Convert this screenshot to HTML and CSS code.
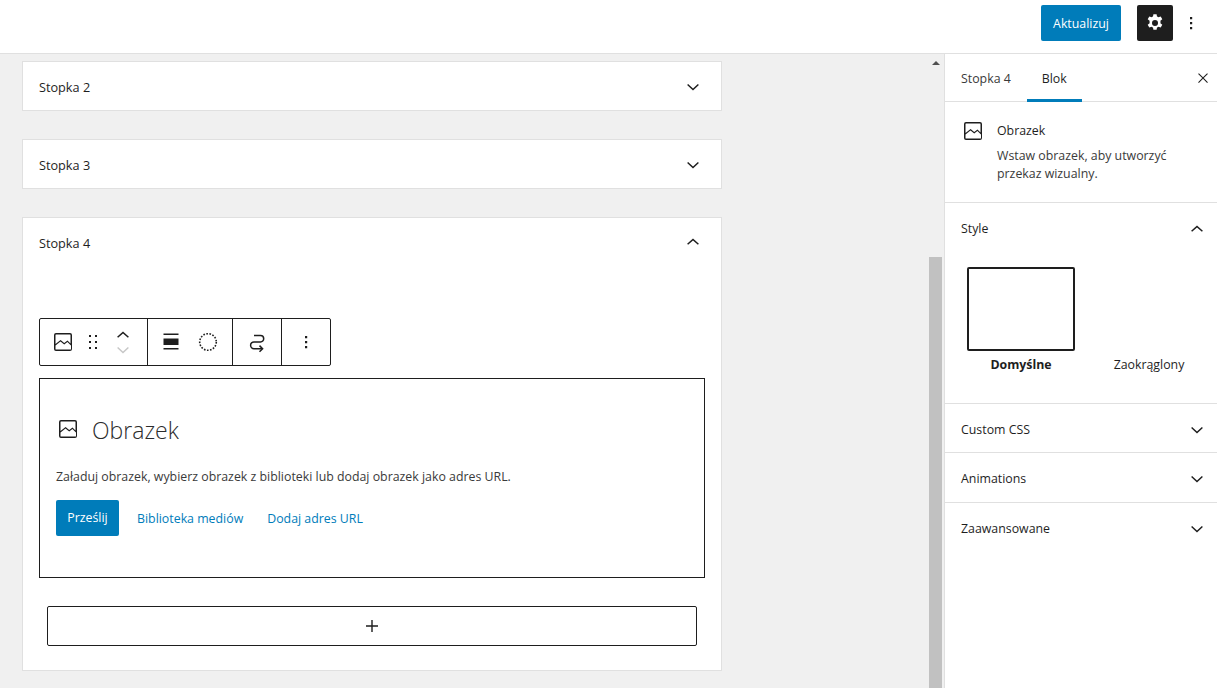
FILE: index.html
```html
<!DOCTYPE html>
<html lang="pl">
<head>
<meta charset="utf-8">
<title>Edytor</title>
<link rel="stylesheet" href="styles.css">
</head>
<body>
<svg class="defs" width="0" height="0" aria-hidden="true">
  <symbol id="img" viewBox="0 0 24 24"><path d="M19 3H5a2 2 0 0 0-2 2v14a2 2 0 0 0 2 2h14a2 2 0 0 0 2-2V5a2 2 0 0 0-2-2zM5 4.500h14a.5.5 0 0 1 .5.5v8.400l-3-2.900-3.300 2.600-3.600-3-5.100 3.900V5a.5.5 0 0 1 .5-.5zm14 15H5a.5.5 0 0 1-.5-.5v-3.600l5-3.800 3.700 3 3.200-2.500 3.600 3.400V19a.5.5 0 0 1-.5.5z"/></symbol>
  <symbol id="down" viewBox="0 0 24 24"><path d="M16.900 10 12 14.400 7.100 10l-1 1.100 5.900 5.300 5.900-5.300z"/></symbol>
  <symbol id="up" viewBox="0 0 24 24"><path d="M7.100 14.800 12 10.400l4.900 4.400 1-1.100L12 8.400l-5.900 5.300z"/></symbol>
</svg>
<header class="topbar">
  <button class="btn-primary update">Aktualizuj</button>
  <button class="gear" aria-label="Ustawienia">
    <svg width="24" height="24" viewBox="0 0 24 24"><path fill="#fff" fill-rule="evenodd" d="M13.600 3.200h-3.200l-.4 2.400c-.5.2-1 .4-1.400.7L6.300 5.400 4.700 8.200l1.900 1.500a6.300 6.300 0 0 0 0 1.600v1l-1.900 1.500 1.600 2.800 2.300-.9c.4.300.9.500 1.400.7l.4 2.400h3.200l.4-2.400c.5-.2 1-.4 1.400-.7l2.300.9 1.600-2.800-1.900-1.500a6.300 6.300 0 0 0 0-2.600l1.900-1.500-1.600-2.800-2.300.9c-.4-.3-.9-.5-1.400-.7zM12 9a3 3 0 1 1 0 6 3 3 0 0 1 0-6z"/></svg>
  </button>
  <button class="icon-btn more-top" aria-label="Więcej">
    <svg width="24" height="24" viewBox="0 0 24 24"><path d="M11 6h2.200v2.200H11zM11 11h2.200v2.200H11zM11 16h2.200v2.200H11z"/></svg>
  </button>
</header>
<div class="workspace">
  <main class="editor">
    <div class="canvas">
      <section class="card">
        <div class="card-head"><span>Stopka 2</span><svg class="chev"><use href="#down"/></svg></div>
      </section>
      <section class="card">
        <div class="card-head"><span>Stopka 3</span><svg class="chev"><use href="#down"/></svg></div>
      </section>
      <section class="card">
        <div class="card-head"><span>Stopka 4</span><svg class="chev"><use href="#up"/></svg></div>
        <div class="card-body">
          <div class="toolbar">
            <div class="tb-group tb-first">
              <svg class="tb-img"><use href="#img"/></svg>
              <svg class="tb-drag" viewBox="0 0 24 24"><path d="M8 5h2v2H8zM14 5h2v2h-2zM8 11h2v2H8zM14 11h2v2h-2zM8 17h2v2H8zM14 17h2v2h-2z"/></svg>
              <span class="movers">
                <svg class="mover"><use href="#up"/></svg>
                <svg class="mover mover-off"><use href="#down"/></svg>
              </span>
            </div>
            <div class="tb-group tb-second">
              <svg class="tb-icon" viewBox="0 0 24 24"><path d="M4.500 3.500h15V5h-15zM4.500 8.500h15V15h-15zM4.500 18h15v1.500h-15z"/></svg>
              <svg class="tb-icon" viewBox="0 0 24 24"><circle cx="12" cy="12" r="8.300" fill="none" stroke="#1e1e1e" stroke-width="1.600" stroke-dasharray="1.600 1.500"/></svg>
            </div>
            <div class="tb-group tb-third">
              <svg class="tb-icon" viewBox="0 0 24 24"><path d="M9 5.500h6.500a3.200 3.200 0 0 1 0 6.400H9a3.400 3.400 0 0 0 0 6.800h8" fill="none" stroke="#1e1e1e" stroke-width="1.500"/><path d="m14.500 15.600 3.100 3.100-3.100 3.100" fill="none" stroke="#1e1e1e" stroke-width="1.500"/></svg>
            </div>
            <div class="tb-group tb-fourth">
              <svg class="tb-icon" viewBox="0 0 24 24"><path d="M11 6h2.200v2.200H11zM11 11h2.200v2.200H11zM11 16h2.200v2.200H11z"/></svg>
            </div>
          </div>
          <div class="placeholder">
            <div class="ph-title"><svg class="ph-icon"><use href="#img"/></svg><span>Obrazek</span></div>
            <p class="ph-text">Załaduj obrazek, wybierz obrazek z biblioteki lub dodaj obrazek jako adres URL.</p>
            <div class="ph-actions">
              <button class="btn-primary upload">Prześlij</button>
              <a class="link" href="#">Biblioteka mediów</a>
              <a class="link" href="#">Dodaj adres URL</a>
            </div>
          </div>
          <button class="appender" aria-label="Dodaj blok">
            <svg width="24" height="24" viewBox="0 0 24 24"><path d="M18 11.300h-5.300V6h-1.400v5.300H6v1.400h5.300V18h1.400v-5.300H18z"/></svg>
          </button>
        </div>
      </section>
    </div>
    <div class="scrollbar"><span class="arrow"></span><span class="thumb"></span></div>
  </main>
  <aside class="sidebar">
    <div class="tabs">
      <span class="tab">Stopka 4</span>
      <span class="tab tab-active">Blok</span>
      <svg class="close" viewBox="0 0 24 24"><path d="m13 12 5.500-5.500-1-1L12 11 6.500 5.500l-1 1L11 12l-5.500 5.500 1 1L12 13l5.500 5.500 1-1z"/></svg>
    </div>
    <div class="block-info">
      <svg class="info-icon"><use href="#img"/></svg>
      <div>
        <h2 class="info-title">Obrazek</h2>
        <p class="info-text">Wstaw obrazek, aby utworzyć przekaz wizualny.</p>
      </div>
    </div>
    <section class="panel panel-style">
      <div class="panel-head"><span>Style</span><svg class="chev"><use href="#up"/></svg></div>
      <div class="styles">
        <div class="style-item"><div class="preview preview-on"></div><span class="style-on">Domyślne</span></div>
        <div class="style-item"><div class="preview"></div><span>Zaokrąglony</span></div>
      </div>
    </section>
    <section class="panel"><div class="panel-head"><span>Custom CSS</span><svg class="chev"><use href="#down"/></svg></div></section>
    <section class="panel panel-tall"><div class="panel-head"><span>Animations</span><svg class="chev"><use href="#down"/></svg></div></section>
    <section class="panel panel-last"><div class="panel-head"><span>Zaawansowane</span><svg class="chev"><use href="#down"/></svg></div></section>
  </aside>
</div>
</body>
</html>
```

FILE: styles.css
```css
* { box-sizing: border-box; }
html, body { height: 100%; }
body {
  margin: 0;
  height: 688px;
  overflow: hidden;
  display: flex;
  flex-direction: column;
  background: #fff;
  color: #1e1e1e;
  font-family: "Open Sans", "Noto Sans", sans-serif;
  font-size: 12.35px;
  line-height: 18px;
}
.defs { position: absolute; }
svg { fill: #1e1e1e; display: block; }
button { font: inherit; cursor: pointer; border: 0; background: none; padding: 0; }

.topbar {
  flex: none;
  height: 54px;
  display: flex;
  align-items: flex-start;
  justify-content: flex-end;
  border-bottom: 1px solid #e0e0e0;
  padding: 5px 14px 0 0;
}
.btn-primary {
  background: #007cba;
  color: #fff;
  border-radius: 2px;
  height: 36px;
}
.update { width: 80px; margin-right: 16px; padding-top: 1px; }
.gear {
  width: 36px;
  height: 36px;
  background: #1e1e1e;
  border-radius: 2px;
  display: flex;
  align-items: center;
  justify-content: center;
  margin-right: 6px;
}
.icon-btn { width: 24px; height: 36px; display: flex; align-items: center; justify-content: center; }

.workspace { flex: 1; display: flex; min-height: 0; }
.editor {
  width: 945px;
  flex: none;
  display: flex;
  background: #f0f0f0;
  border-right: 1px solid #e0e0e0;
  min-height: 0;
  overflow: hidden;
}
.canvas { flex: 1; padding: 7px 206px 0 22px; min-width: 0; }
.card {
  background: #fff;
  border: 1px solid #e0e0e0;
  margin-bottom: 28px;
}
.card-head {
  height: 48px;
  display: flex;
  align-items: center;
  justify-content: space-between;
  padding: 0 16px;
  font-size: 12.7px;
}
.card-head span { margin-top: 2px; }
.chev { width: 24px; height: 24px; flex: none; }
.card-body { padding: 52px 16px 24px; }

.toolbar {
  display: flex;
  height: 48px;
  width: 292px;
  border: 1px solid #1e1e1e;
  border-radius: 2px;
  background: #fff;
}
.tb-group {
  display: flex;
  align-items: center;
  border-right: 1px solid #1e1e1e;
}
.tb-first { width: 108px; padding-left: 11px; }
.tb-second { width: 85px; padding-left: 11px; gap: 13px; }
.tb-third { width: 49px; padding-left: 12px; }
.tb-fourth { width: 48px; padding-left: 12px; border-right: 0; }
.tb-img { width: 24px; height: 24px; }
.tb-drag { width: 24px; height: 24px; margin-left: 6px; }
.tb-icon { width: 24px; height: 24px; flex: none; }
.movers { display: flex; flex-direction: column; margin-left: 6px; }
.mover { width: 24px; height: 24px; }
.mover-off { fill: #c7c7c7; margin-top: -10px; }

.placeholder {
  margin-top: 12px;
  height: 200px;
  border: 1px solid #1e1e1e;
  padding: 35px 16px 0;
}
.ph-title {
  display: flex;
  align-items: center;
  font-size: 23px;
  font-weight: 300;
  line-height: 32px;
  color: #2c2c2c;
}
.ph-icon { width: 24px; height: 24px; margin-right: 12px; margin-top: -2px; }
.ph-text { margin: 22px 0 0; line-height: 18px; color: #3a3a3a; }
.ph-actions { display: flex; align-items: center; margin-top: 14px; }
.upload { width: 63px; margin-right: 18px; }
.link { color: #007cba; text-decoration: none; margin-right: 24px; margin-top: 2px; }

.appender {
  margin: 28px 8px 0;
  display: flex;
  width: 650px;
  height: 40px;
  align-items: center;
  justify-content: center;
  border: 1px solid #1e1e1e;
  border-radius: 2px;
  background: #fff;
}

.scrollbar {
  width: 15px;
  flex: none;
  margin-right: 1px;
  background: #f0f0f0;
  display: flex;
  flex-direction: column;
  align-items: center;
}
.arrow {
  margin-top: 7px;
  width: 0;
  height: 0;
  border-left: 4px solid transparent;
  border-right: 4px solid transparent;
  border-bottom: 4px solid #505050;
}
.thumb { margin-top: 192px; width: 13px; flex: 1; background: #c1c1c1; }

.sidebar { flex: 1; min-width: 0; background: #fff; }
.tabs {
  height: 48px;
  display: flex;
  align-items: stretch;
  position: relative;
  border-bottom: 1px solid #e0e0e0;
}
.tab { display: flex; align-items: center; padding: 2px 16px 0; height: 48px; }
.tab:first-child { color: #3a3a3a; }
.tab-active { width: 55px; justify-content: center; padding: 5px 0 0; border-bottom: 3px solid #007cba; }
.close { position: absolute; right: 5px; top: 15px; width: 18px; height: 18px; }

.block-info {
  display: flex;
  padding: 18px 16px 0;
  border-bottom: 1px solid #e0e0e0;
  height: 101px;
}
.info-icon { width: 24px; height: 24px; flex: none; margin: -1px 12px 0 0; }
.info-title { margin: 1px 0 0; font-size: inherit; font-weight: 400; line-height: 20px; }
.info-text { margin: 6px 0 0; width: 200px; line-height: 18px; color: #3a3a3a; }

.panel { border-bottom: 1px solid #e0e0e0; }
.panel-tall { padding-bottom: 1px; }
.panel-last { border-bottom: 0; }
.panel-head {
  height: 48px;
  display: flex;
  align-items: center;
  justify-content: space-between;
  padding: 2px 8px 0 16px;
}
.panel-head span { margin-top: 2px; }
.panel-style { height: 201px; }
.panel-style .panel-head { height: 50px; }
.panel-style .panel-head span { margin-top: 0; }
.styles { display: flex; padding: 14px 0 0 22px; gap: 20px; }
.style-item { width: 108px; display: flex; flex-direction: column; align-items: center; gap: 5px; }
.preview { width: 108px; height: 84px; }
.preview-on { border: 2px solid #1e1e1e; border-radius: 2px; }
.style-on { font-weight: 700; }
```
